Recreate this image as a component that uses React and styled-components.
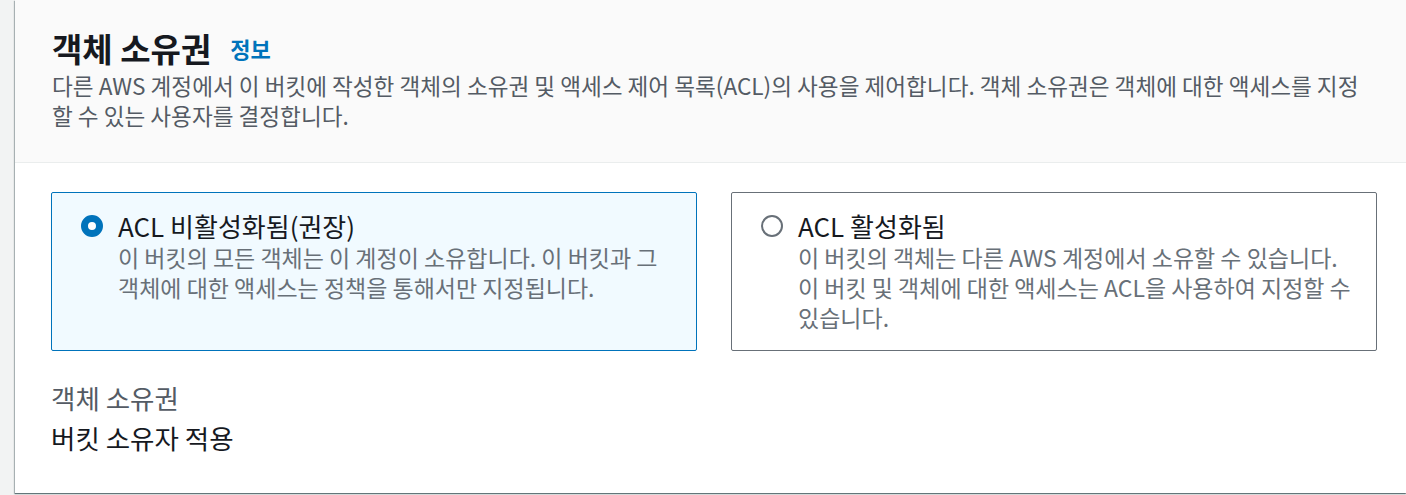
import React from "react";
import styled, { createGlobalStyle } from "styled-components";

const GlobalStyle = createGlobalStyle`
  html, body {
    margin: 0;
    padding: 0;
    background: #f2f3f3;
    font-family: "Noto Sans CJK KR", "Noto Sans", sans-serif;
    color: #16191f;
  }
`;

const Page = styled.div`
  display: flex;
  height: 495px;
  padding-left: 15px;
  box-sizing: border-box;
  overflow: hidden;
`;

const Panel = styled.section`
  flex: 1;
  height: 493px;
  background: #fff;
  box-shadow: 0 1px 1px 0 rgba(0, 28, 36, 0.45),
    -1px 1px 1px 0 rgba(0, 28, 36, 0.25);
  display: flex;
  flex-direction: column;
`;

const Header = styled.header`
  background: #fafafa;
  border-bottom: 1px solid #eaeded;
  padding: 28px 29px 31px 37px;
`;

const TitleRow = styled.div`
  display: flex;
  align-items: center;
  gap: 19px;
  height: 40px;
`;

const Title = styled.h2`
  margin: 0;
  font-size: 33px;
  line-height: 40px;
  font-weight: 700;
  color: #16191f;
`;

const InfoLink = styled.a`
  font-size: 22px;
  line-height: 40px;
  font-weight: 700;
  color: #0073bb;
  text-decoration: none;
`;

const Description = styled.p`
  margin: 3px 0 0;
  font-size: 22.6px;
  line-height: 30px;
  color: #545b64;
`;

const Body = styled.div`
  padding: 29px 29px 0 36px;
`;

const Tiles = styled.div`
  display: grid;
  grid-template-columns: 1fr 1fr;
  gap: 34px;
`;

const Tile = styled.label`
  display: flex;
  gap: 15px;
  padding: 16px 12px 18px 29px;
  border: 1px solid ${(p) => (p.$selected ? "#0073bb" : "#687078")};
  border-radius: 2px;
  background: ${(p) => (p.$selected ? "#f1faff" : "#fff")};
  cursor: pointer;
`;

const Radio = styled.span`
  flex: none;
  width: 22px;
  height: 22px;
  margin-top: 6px;
  box-sizing: border-box;
  border-radius: 50%;
  background: #fff;
  border: ${(p) => (p.$checked ? "7px solid #0073bb" : "2px solid #687078")};
`;

const TileText = styled.div`
  display: flex;
  flex-direction: column;
`;

const TileLabel = styled.span`
  font-size: 26px;
  line-height: 33px;
  color: #16191f;
`;

const TileDesc = styled.span`
  font-size: 23px;
  line-height: 30px;
  color: #687078;
`;

const Field = styled.div`
  margin-top: 31px;
  display: flex;
  flex-direction: column;
  gap: 8px;
`;

const FieldLabel = styled.div`
  font-size: 26.5px;
  line-height: 32px;
  color: #545b64;
`;

const FieldValue = styled.div`
  font-size: 26.5px;
  line-height: 32px;
  color: #16191f;
`;

const options = [
  {
    id: "disabled",
    label: "ACL 비활성화됨(권장)",
    desc: [
      "이 버킷의 모든 객체는 이 계정이 소유합니다. 이 버킷과 그",
      "객체에 대한 액세스는 정책을 통해서만 지정됩니다.",
    ],
  },
  {
    id: "enabled",
    label: "ACL 활성화됨",
    desc: [
      "이 버킷의 객체는 다른 AWS 계정에서 소유할 수 있습니다.",
      "이 버킷 및 객체에 대한 액세스는 ACL을 사용하여 지정할 수",
      "있습니다.",
    ],
  },
];

export default function App() {
  const selected = "disabled";
  return (
    <>
      <GlobalStyle />
      <Page>
        <Panel>
          <Header>
            <TitleRow>
              <Title>객체 소유권</Title>
              <InfoLink href="#">정보</InfoLink>
            </TitleRow>
            <Description>
              다른 AWS 계정에서 이 버킷에 작성한 객체의 소유권 및 액세스 제어
              목록(ACL)의 사용을 제어합니다. 객체 소유권은 객체에 대한
              액세스를 지정할 수 있는 사용자를 결정합니다.
            </Description>
          </Header>
          <Body>
            <Tiles>
              {options.map((o) => (
                <Tile key={o.id} $selected={o.id === selected}>
                  <Radio $checked={o.id === selected} />
                  <TileText>
                    <TileLabel>{o.label}</TileLabel>
                    <TileDesc>
                      {o.desc.map((line, i) => (
                        <React.Fragment key={i}>
                          {i > 0 && <br />}
                          {line}
                        </React.Fragment>
                      ))}
                    </TileDesc>
                  </TileText>
                </Tile>
              ))}
            </Tiles>
            <Field>
              <FieldLabel>객체 소유권</FieldLabel>
              <FieldValue>버킷 소유자 적용</FieldValue>
            </Field>
          </Body>
        </Panel>
      </Page>
    </>
  );
}
